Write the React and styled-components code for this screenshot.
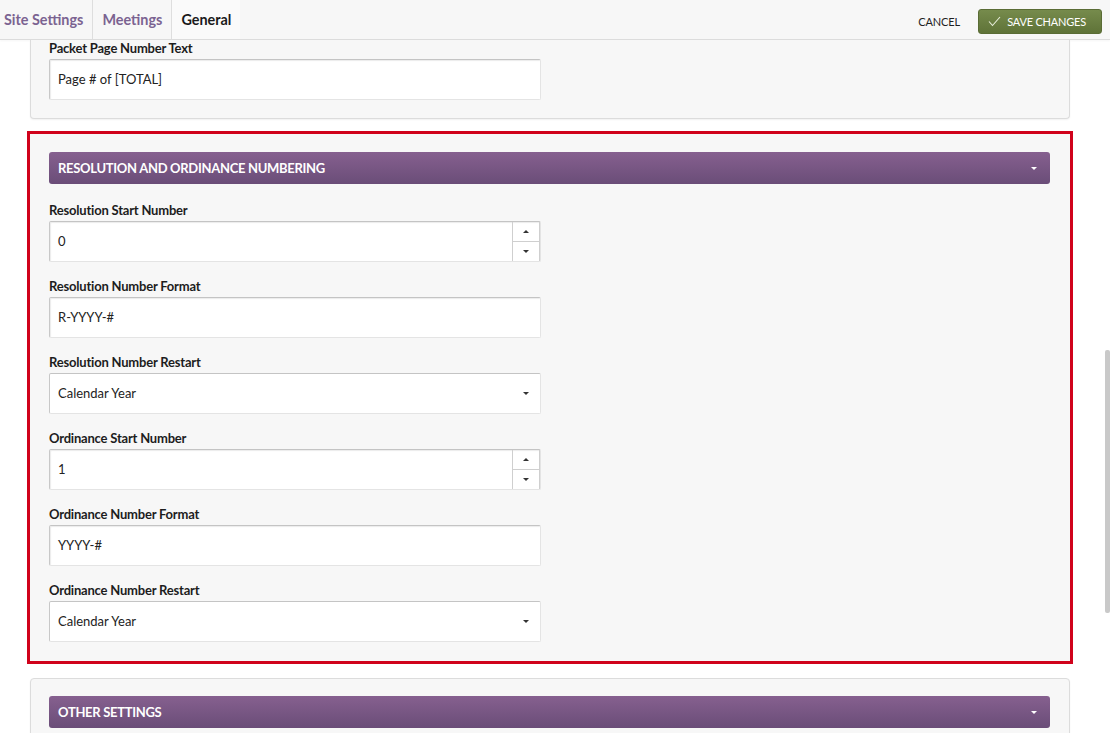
import React from 'react';
import styled, { createGlobalStyle } from 'styled-components';

const GlobalStyle = createGlobalStyle`
  html, body {
    margin: 0;
    padding: 0;
    background: #fff;
    font-family: 'Lato', 'Open Sans', sans-serif;
    overflow: hidden;
  }
`;

const TopBar = styled.header`
  height: 39px;
  display: flex;
  align-items: stretch;
  justify-content: space-between;
  background: #f7f7f7;
  border-bottom: 1px solid #dcdcdc;
  box-shadow: 0 1px 2px rgba(0, 0, 0, 0.04);
`;

const Tabs = styled.nav`
  display: flex;
  margin-left: -5px;
`;

const Tab = styled.div`
  display: flex;
  align-items: center;
  padding: 0 9px;
  font-size: 14.4px;
  font-weight: 700;
  color: ${(p) => (p.$active ? '#1a1a1a' : '#7b6391')};
  background: ${(p) => (p.$active ? '#fafafa' : 'transparent')};
  border-right: 1px solid #dedede;
  &:last-child {
    border-right: none;
  }
`;

const Actions = styled.div`
  display: flex;
  align-items: center;
  gap: 18px;
  padding-right: 8px;
`;

const CancelButton = styled.button`
  border: none;
  background: none;
  font-family: inherit;
  font-size: 11px;
  letter-spacing: -0.1px;
  color: #1f1f1f;
  padding: 0;
  margin-top: 3px;
  cursor: pointer;
`;

const SaveButton = styled.button`
  display: flex;
  align-items: center;
  gap: 6px;
  height: 25px;
  margin-top: 4px;
  padding: 0 15px 0 9px;
  border: 1px solid #5a6c35;
  border-radius: 3px;
  background: linear-gradient(#768b4c, #5f7338);
  color: #fff;
  font-family: inherit;
  font-size: 11px;
  letter-spacing: -0.2px;
  cursor: pointer;
`;

const Page = styled.main`
  width: 1040px;
  margin-left: 30px;
`;

const Panel = styled.section`
  background: #f7f7f7;
  border: 1px solid #dcdcdc;
  border-top: ${(p) => (p.$cut ? 'none' : '1px solid #dcdcdc')};
  border-radius: ${(p) => (p.$cut ? '0 0 4px 4px' : '4px')};
  box-shadow: 0 1px 2px rgba(0, 0, 0, 0.06);
  padding: ${(p) => (p.$cut ? '0' : '17px')} 19px 18px 18px;
`;

const Highlight = styled.div`
  margin: 12px -3px 14px;
  border: 3px solid #d0021b;
  & > ${Panel} {
    border-color: transparent;
    border-radius: 0;
    box-shadow: none;
    padding-top: 17px;
    padding-bottom: 18px;
  }
`;

const SectionHeader = styled.div`
  height: 32px;
  display: flex;
  align-items: center;
  justify-content: space-between;
  padding: 0 13px 0 9px;
  border-radius: 3px;
  background: linear-gradient(#86608f, #6a4d78);
  color: #fff;
  font-size: 13px;
  font-weight: 700;
  letter-spacing: -0.3px;
  text-transform: uppercase;
  margin-bottom: ${(p) => (p.$last ? '0' : '18px')};
`;

const Caret = styled.span`
  width: 0;
  height: 0;
  border-left: 3px solid transparent;
  border-right: 3px solid transparent;
  border-top: 3px solid ${(p) => p.$color || '#fff'};
  transform: ${(p) => (p.$up ? 'rotate(180deg)' : 'none')};
`;

const Field = styled.div`
  width: 492px;
  margin-bottom: 16px;
  &:last-child {
    margin-bottom: 0;
  }
`;

const Label = styled.label`
  display: block;
  font-size: 13px;
  line-height: 16px;
  font-weight: 700;
  color: #1d1d1d;
  letter-spacing: -0.2px;
  margin-bottom: 3px;
`;

const Box = styled.div`
  height: 41px;
  box-sizing: border-box;
  display: flex;
  align-items: stretch;
  background: #fff;
  border: 1px solid #e4e4e4;
  border-top-color: #c4c4c4;
  border-left-color: #c8c8c8;
  border-radius: 2px;
  box-shadow: ${(p) => (p.$flat ? 'none' : 'inset 1px 1px 1px rgba(0,0,0,0.08)')};
`;

const Value = styled.span`
  flex: 1;
  display: flex;
  align-items: center;
  padding: 0 0 2px 8px;
  font-size: 13px;
  color: #222;
`;

const Stepper = styled.div`
  width: 26px;
  display: flex;
  flex-direction: column;
  border-left: 1px solid #cfcfcf;
  border-right: 1px solid #cfcfcf;
`;

const StepHalf = styled.div`
  flex: 1;
  display: flex;
  align-items: center;
  justify-content: center;
  border-bottom: ${(p) => (p.$top ? '1px solid #cfcfcf' : 'none')};
`;

const SelectCaret = styled.div`
  width: 28px;
  display: flex;
  align-items: center;
  justify-content: center;
`;

const Scrollbar = styled.div`
  position: fixed;
  right: 0;
  top: 350px;
  width: 5px;
  height: 263px;
  border-radius: 2px;
  background: #c9c9c9;
`;

function NumberInput({ value }) {
  return (
    <Box>
      <Value>{value}</Value>
      <Stepper>
        <StepHalf $top>
          <Caret $color="#333" $up />
        </StepHalf>
        <StepHalf>
          <Caret $color="#333" />
        </StepHalf>
      </Stepper>
    </Box>
  );
}

function TextInput({ value }) {
  return (
    <Box>
      <Value>{value}</Value>
    </Box>
  );
}

function SelectInput({ value }) {
  return (
    <Box $flat>
      <Value>{value}</Value>
      <SelectCaret>
        <Caret $color="#333" />
      </SelectCaret>
    </Box>
  );
}

export default function App() {
  return (
    <>
      <GlobalStyle />
      <TopBar>
        <Tabs>
          <Tab>Site Settings</Tab>
          <Tab>Meetings</Tab>
          <Tab $active>General</Tab>
        </Tabs>
        <Actions>
          <CancelButton>CANCEL</CancelButton>
          <SaveButton>
            <svg width="13" height="11" viewBox="0 0 13 11" fill="none">
              <path d="M1 5.5 L4.5 9.5 L12 1" stroke="#e8eedb" strokeWidth="1.1" />
            </svg>
            SAVE CHANGES
          </SaveButton>
        </Actions>
      </TopBar>

      <Page>
        <Panel $cut>
          <Field>
            <Label>Packet Page Number Text</Label>
            <TextInput value="Page # of [TOTAL]" />
          </Field>
        </Panel>

        <Highlight>
          <Panel>
            <SectionHeader>
              Resolution and Ordinance Numbering
              <Caret />
            </SectionHeader>
            <Field>
              <Label>Resolution Start Number</Label>
              <NumberInput value="0" />
            </Field>
            <Field>
              <Label>Resolution Number Format</Label>
              <TextInput value="R-YYYY-#" />
            </Field>
            <Field>
              <Label>Resolution Number Restart</Label>
              <SelectInput value="Calendar Year" />
            </Field>
            <Field>
              <Label>Ordinance Start Number</Label>
              <NumberInput value="1" />
            </Field>
            <Field>
              <Label>Ordinance Number Format</Label>
              <TextInput value="YYYY-#" />
            </Field>
            <Field>
              <Label>Ordinance Number Restart</Label>
              <SelectInput value="Calendar Year" />
            </Field>
          </Panel>
        </Highlight>

        <Panel>
          <SectionHeader $last>
            Other Settings
            <Caret />
          </SectionHeader>
        </Panel>
      </Page>
      <Scrollbar />
    </>
  );
}
